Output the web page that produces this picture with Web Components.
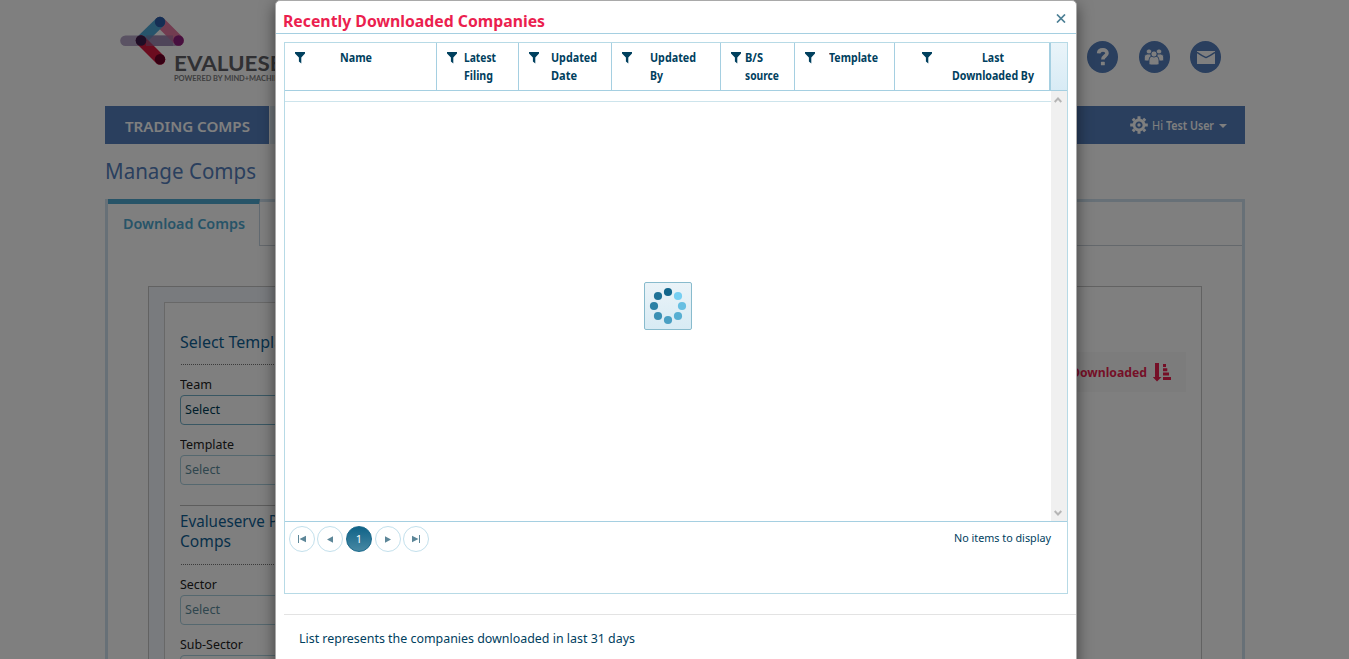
<!DOCTYPE html>
<html lang="en">
<head>
<meta charset="utf-8">
<title>Manage Comps</title>
<style>
html,body{margin:0;height:100%;overflow:hidden;background:#fff}
body{font-family:"Noto Sans","Open Sans",sans-serif;font-size:13px;color:#00405e}
</style>
</head>
<body>
<comps-app></comps-app>
<script>
const fits = [];
function define(name, html, setup) {
  const t = document.createElement('template');
  t.innerHTML = html;
  customElements.define(name, class extends HTMLElement {
    constructor() {
      super();
      this.attachShadow({mode: 'open'}).appendChild(t.content.cloneNode(true));
    }
    connectedCallback() { if (setup) setup(this, this.shadowRoot); }
  });
}

/* A single line of text condensed or widened to a given width. */
define('fit-text', `<style>:host{display:inline-block;white-space:nowrap;text-align:left;vertical-align:top}
span{display:inline-block;transform-origin:0 50%}</style><span><slot></slot></span>`,
(el) => fits.push(el));

define('filter-icon', `<style>:host{display:block;width:10px;height:12px}svg{display:block}</style>
<svg width="10" height="12" viewBox="0 0 10 12"><path d="M0 0H10V1.4L6.3 5.4V11.4L3.9 9.6V5.4L0 1.4Z" fill="#00405e"/></svg>`);

define('brand-logo', `<style>:host{display:block;width:190px;height:72px;color:#606166}
.n{font:700 21.5px/22px Lato,sans-serif;margin:-16px 0 0 55px}
.s{font:700 7.2px/9px Lato,sans-serif;margin:0 0 0 55px;color:#7c7c80}svg{display:block}fit-text{display:block}</style>
<svg width="68" height="54" viewBox="0 0 68 54" stroke-linecap="round" stroke-width="10.6" fill="none">
<path d="M6.5 26.7H59.5" stroke="#b4a4c6"/><path d="M41 8L59.5 26.5" stroke="#e578a0"/>
<path d="M22 26.5L41 8" stroke="#4fa9d6"/><path d="M22 26.5L41 45.5" stroke="#d6193f"/><path d="M27 26.7H54" stroke="#8a6f9f" stroke-opacity=".5" stroke-linecap="butt"/>
<g stroke="none"><circle cx="41" cy="8" r="5.2" fill="#2c5ca8"/><circle cx="59.5" cy="26.5" r="5.2" fill="#8f1f7e"/><circle cx="22" cy="26.5" r="5.3" fill="#3d1a4a"/><circle cx="41" cy="45.3" r="5.2" fill="#6d0026"/></g></svg>
<fit-text class="n" w="151">EVALUESERVE</fit-text><fit-text class="s" w="110">POWERED BY MIND+MACHINE</fit-text>`);

define('icon-disc', `<style>:host{display:grid;place-items:center;width:31px;height:32px;border-radius:50%;background:#547ebc}</style><slot></slot>`);

define('site-header', `<style>:host{display:flex;justify-content:space-between;height:92px;padding:14px 23px 0 14px}
nav{display:flex;gap:20.5px;padding:27px .6px 0 0}svg{display:block}</style>
<brand-logo></brand-logo>
<nav>
<icon-disc><svg width="14" height="18" viewBox="0 0 14 18" fill="none"><path d="M2.6 5.3C3 .9 11 .7 11 5.2C11 8 6.9 8 6.9 11.4" stroke="#fff" stroke-width="3.6"/><rect x="4.9" y="13.8" width="3.9" height="3.5" rx=".6" fill="#fff"/></svg></icon-disc>
<icon-disc><svg width="20" height="18" viewBox="0 0 20 18" fill="#fff" stroke="#547ebc" stroke-width=".9"><circle cx="5" cy="3.6" r="2.7"/><circle cx="15" cy="3.6" r="2.7"/><path d="M.3 12V9Q.3 6 3.5 6H7V13H2Q.3 13 .3 12ZM19.7 12V9Q19.7 6 16.5 6H13V13H18Q19.7 13 19.7 12Z"/><path d="M5 15.4V12Q5 8.3 8 8.3H12Q15 8.3 15 12V15.4Q15 17 13 17H7Q5 17 5 15.4Z"/><circle cx="10" cy="6" r="3.1"/></svg></icon-disc>
<icon-disc><svg width="18" height="13" viewBox="0 0 18 13"><path d="M0 0H18V13H0Z" fill="#fff"/><path d="M0 1.3Q5 4.8 9 6.6Q13 4.8 18 1.3" fill="none" stroke="#547ebc" stroke-width="1.4"/></svg></icon-disc>
</nav>`);

define('main-nav', `<style>:host{display:flex;height:38px;background:#547ebc;color:#fff;box-sizing:border-box}
.t{width:164px;box-sizing:border-box;padding-left:20px;font:600 15px/40px "Noto Sans",sans-serif}
.g{width:160px;background:#dfebf5;border-left:1px solid #fff}
.u{margin-left:auto;display:flex;align-items:center;padding-right:18px;font-size:12px}
svg{display:block}.hi{margin:0 3px 0 4px}.c{margin:1px 0 0 5px}b{font-weight:600}</style>
<div class="t"><fit-text w="125">TRADING COMPS</fit-text></div><div class="g"></div>
<div class="u"><svg width="18" height="18" viewBox="-9 -9 18 18" fill="none" stroke="#fff"><circle r="5" stroke-width="2.8"/><path stroke-width="3" d="M0-8.8V-6M0 8.8V6M-8.8 0H-6M8.8 0H6M-6.2-6.2L-4.4-4.4M6.2-6.2L4.4-4.4M-6.2 6.2L-4.4 4.4M6.2 6.2L4.4 4.4"/><circle r="1.7" fill="#fff" stroke="none"/></svg>
<fit-text class="hi" w="11">Hi</fit-text><b><fit-text w="48">Test User</fit-text></b>
<svg class="c" width="8" height="4"><path d="M0 0H8L4 4Z" fill="#fff"/></svg></div>`);

define('form-field', `<style>:host{display:block;height:60px;color:#222;font-size:13px}
.l{height:21px;line-height:21px}.b{box-sizing:border-box;height:30px;border:1px solid var(--line,#abd0de);border-radius:4px;padding-left:4px;line-height:27px;color:var(--ink,#5e8c9c);width:280px}</style>
<div class="l"><slot name="label"></slot></div><div class="b"><fit-text w="35">Select</fit-text></div>`);

define('filter-form', `<style>:host{display:block;width:300px;background:#fff;border:1px solid #d0d0d0;padding:29px 15px 0;box-sizing:border-box;height:420px;color:#0f6195}
h3{margin:0;font-weight:400;font-size:17px;line-height:20px}
.d{border-top:1px dotted #777;height:9px;margin-left:1px}
.r{border-top:1px solid #bababa;height:5px}.x{--ink:#003d56;--line:#72afc7}</style>
<h3><fit-text w="118">Select Template</fit-text></h3><div class="d" style="margin-top:12px"></div>
<form-field class="x"><fit-text slot="label" w="32">Team</fit-text></form-field>
<form-field><fit-text slot="label" w="54">Template</fit-text></form-field>
<div class="r" style="margin-top:11px"></div>
<h3><fit-text w="161">Evalueserve Precedent</fit-text></h3><h3><fit-text w="51">Comps</fit-text></h3><div class="d" style="margin-top:13px"></div>
<form-field><fit-text slot="label" w="37">Sector</fit-text></form-field>
<form-field><fit-text slot="label" w="63">Sub-Sector</fit-text></form-field>`);

define('tab-panel', `<style>:host{display:block;border:3px solid #cfe0ee;height:700px;box-sizing:border-box}
.tabs{display:flex;height:44px}.t{width:151px;box-sizing:content-box;margin-top:-3px;border-top:5px solid #4fa8d0;border-right:1px solid #c5d5e2;height:42px;font:600 15px/38px "Noto Sans",sans-serif;color:#4fa8d0}
.t fit-text{margin-left:14.5px}.rest{flex:1;border-bottom:1px solid #c9d1d8}
.p{margin:40px 40px 0;border:1px solid #c4c4c4;display:flex;justify-content:space-between;height:500px}
.l{background:#f3f7fd;padding:15px 15px 0}
.d{margin:65px 15px 0 0;height:40px;width:160px;background:#f9f9f9;display:flex;align-items:center;justify-content:flex-end;color:#eb1f4f;font-size:13px;font-weight:700;gap:6px;padding-right:15px;box-sizing:border-box}</style>
<div class="tabs"><div class="t"><fit-text w="122">Download Comps</fit-text></div><div class="rest"></div></div>
<div class="p"><div class="l"><filter-form></filter-form></div><div class="d"><fit-text w="76">Downloaded</fit-text>
<svg width="18" height="19" viewBox="0 0 18 19" fill="#eb1f4f"><path d="M2 0H6V14H8.5L4 18.5L-.3 14H2ZM10 1H13V4H10ZM10 5.2H14.3V8.3H10ZM10 9.5H16V12.4H10ZM10 14H18V17H10Z"/></svg></div></div>`);

define('head-cell', `<style>:host{display:block;box-sizing:border-box;border-right:1px solid #a5cfe1;font-weight:700;font-size:11.5px;line-height:18px;color:#00405e}
.r{display:flex;padding:6px 0 0 var(--f)}.t{margin-left:var(--g)}filter-icon{margin-top:3px}</style>
<div class="r"><filter-icon></filter-icon><div class="t"><slot></slot></div></div>`);

define('page-button', `<style>:host{display:grid;place-items:center;box-sizing:border-box;width:26px;height:26px;border:1px solid #c3e0ec;border-radius:50%;font-size:11px;line-height:24px;color:#fff}
:host([current]){background:linear-gradient(#106388,#4788a3);border-color:#19688b}</style><slot></slot>`);

define('busy-indicator', `<style>:host{display:block;box-sizing:border-box;width:48px;height:48px;border:1px solid #88bbcd;border-radius:2px;background:linear-gradient(#eaf3f8,#d8ebf4)}svg{display:block}</style>
<svg width="46" height="46" viewBox="0 0 46 46"><circle cx="23" cy="9" r="4.1" fill="#11658b"/><circle cx="33" cy="13" r="4.1" fill="#77cff2"/><circle cx="37" cy="23" r="4.1" fill="#67bfe2"/><circle cx="33" cy="33" r="4.1" fill="#58afd2"/><circle cx="23" cy="37" r="4.1" fill="#499fc3"/><circle cx="13" cy="33" r="4.1" fill="#3a90b4"/><circle cx="9" cy="23" r="4.1" fill="#2c81a5"/><circle cx="13" cy="13" r="4.1" fill="#1f7297"/></svg>`);

define('scroll-track', `<style>:host{display:flex;flex-direction:column;justify-content:space-between;align-items:center;box-sizing:border-box;width:16px;padding:6px 2px 5px 0;background:#f0f0f0}svg{display:block}</style>
<svg width="8" height="6"><path d="M.7 5L4 1.5L7.3 5" fill="none" stroke="#b5b5b5" stroke-width="1.9"/></svg>
<svg width="8" height="6"><path d="M.7 1L4 4.5L7.3 1" fill="none" stroke="#b5b5b5" stroke-width="1.9"/></svg>`);

define('company-grid', `<style>:host{display:block;box-sizing:border-box;width:784px;height:552px;border:1px solid #b7dae6}
.h{display:grid;grid-template-columns:152px 82px 93px 109px 74px 100px 156px 1fr;height:48px;box-sizing:border-box;border-bottom:1px solid #a5cfe1}
.e{background:linear-gradient(#eaf4f9,#d8ebf5)}.w{border-right-width:2px}
.b{display:flex;height:430px}.m{flex:1;border-top:1px solid #cde4ec;margin-top:10px;display:grid;justify-content:center;align-content:start;padding-top:180px}
.f{display:flex;border-top:1px solid #a5cfe1;height:70px;padding:4px 16px 0 4px;font-size:11px;box-sizing:border-box}
page-button{margin-right:2px}page-button:nth-child(2),page-button:nth-child(3){margin-right:3px}
.n{margin:4px 0 0 auto;line-height:16px}svg{display:block}fit-text{display:block}.c fit-text:first-child{margin:0 auto}</style>
<div class="h">
<head-cell style="--f:10px;--g:35px"><fit-text w="32">Name</fit-text></head-cell>
<head-cell style="--f:10px;--g:7px"><fit-text w="32">Latest</fit-text><fit-text w="29">Filing</fit-text></head-cell>
<head-cell style="--f:10px;--g:11.5px"><fit-text w="46">Updated</fit-text><fit-text w="26">Date</fit-text></head-cell>
<head-cell style="--f:10px;--g:18px"><fit-text w="46">Updated</fit-text><fit-text w="13">By</fit-text></head-cell>
<head-cell style="--f:10px;--g:4px"><fit-text w="18">B/S</fit-text><fit-text w="34">source</fit-text></head-cell>
<head-cell style="--f:10px;--g:14px"><fit-text w="49">Template</fit-text></head-cell>
<head-cell class="w" style="--f:27px;--g:20px"><div class="c"><fit-text w="22">Last</fit-text><fit-text w="82">Downloaded By</fit-text></div></head-cell>
<div class="e"></div></div>
<div class="b"><div class="m"><busy-indicator></busy-indicator></div><scroll-track></scroll-track></div>
<div class="f">
<page-button><svg width="8" height="8" fill="#5c8698"><path d="M0 0H1V8H0ZM8 .8V7.2L1.5 4Z"/></svg></page-button>
<page-button><svg width="6" height="7" fill="#5c8698"><path d="M6 .2V6.8L0 3.5Z"/></svg></page-button>
<page-button current>1</page-button>
<page-button><svg width="6" height="7" fill="#5c8698"><path d="M0 .2V6.8L6 3.5Z"/></svg></page-button>
<page-button><svg width="8" height="8" fill="#5c8698"><path d="M7 0H8V8H7ZM0 .8V7.2L6.5 4Z"/></svg></page-button>
<fit-text class="n" w="97">No items to display</fit-text></div>`);

define('modal-dialog', `<style>:host{display:block;box-sizing:border-box;width:802px;height:720px;background:#fff;border:1px solid #a9a9a9;border-radius:5px;box-shadow:0 5px 15px rgba(0,0,0,.5)}
header{display:flex;justify-content:space-between;height:33px;box-sizing:border-box;border-bottom:1px solid #a5cfe1;padding:8px 10px 0 7px;color:#eb1f4f;font-weight:700;font-size:16.5px;line-height:24px}
header svg{margin-top:5px}company-grid{margin:8px 0 0 8px}
footer{margin:20px 0 0 8px;border-top:1px solid #e3e3e3;padding:13px 0 0 15px;line-height:20px;font-size:13px}</style>
<header><fit-text w="262">Recently Downloaded Companies</fit-text><svg width="10" height="9"><path d="M1 .5L9 8.5M9 .5L1 8.5" stroke="#4c7f95" stroke-width="1.7"/></svg></header>
<company-grid></company-grid><footer><fit-text w="336">List represents the companies downloaded in last 31 days</fit-text></footer>`);

define('comps-app', `<style>:host{display:block;position:relative;height:659px;overflow:hidden}
main{width:1140px;margin-left:105px}h1{margin:0;font-weight:400;font-size:21px;line-height:55px;height:55px;color:#547ebc}
.o{position:absolute;inset:0;background:rgba(0,0,0,.5)}modal-dialog{position:absolute;left:275px;top:0}</style>
<main><site-header></site-header><main-nav></main-nav><h1><fit-text w="151">Manage Comps</fit-text></h1><tab-panel></tab-panel></main>
<div class="o"></div><modal-dialog></modal-dialog>`);

for (const el of fits) {
  const s = el.shadowRoot.querySelector('span'), w = +el.getAttribute('w');
  const n = s.getBoundingClientRect().width;
  el.style.width = w + 'px';
  if (n) s.style.transform = 'scaleX(' + w / n + ')';
}
</script>
</body>
</html>
